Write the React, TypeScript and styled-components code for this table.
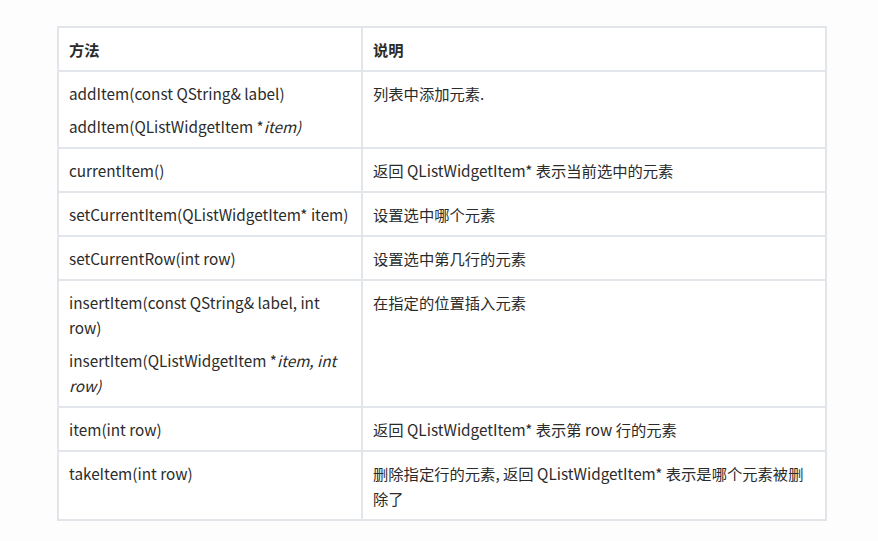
import React from 'react';
import styled, { createGlobalStyle } from 'styled-components';

const GlobalStyle = createGlobalStyle`
  html, body {
    margin: 0;
    padding: 0;
    background: #fdfdfd;
  }

  body {
    color: #2b2b2b;
    font-family: 'Noto Sans CJK SC', 'Noto Sans', sans-serif;
    font-size: 15.3px;
  }
`;

const Page = styled.div`
  padding: 26px 0 0 57px;
`;

const Table = styled.table`
  border-collapse: collapse;
  table-layout: fixed;
  width: 770px;
  background: #fff;

  th, td {
    border: 2px solid #e2e5e9;
    padding: 8.5px 10px;
    text-align: left;
    vertical-align: top;
    line-height: 25px;
  }
`;

const HeadCell = styled.th`
  font-weight: 700;
`;

const Cell = styled.td``;

const Para = styled.p`
  margin: 0;

  & + & {
    margin-top: 8px;
  }
`;

interface Row {
  method: React.ReactNode[];
  desc: string;
}

const rows: Row[] = [
  {
    method: [
      'addItem(const QString& label)',
      <>addItem(QListWidgetItem *<i>item)</i></>
    ],
    desc: '列表中添加元素.'
  },
  { method: ['currentItem()'], desc: '返回 QListWidgetItem* 表示当前选中的元素' },
  { method: ['setCurrentItem(QListWidgetItem* item)'], desc: '设置选中哪个元素' },
  { method: ['setCurrentRow(int row)'], desc: '设置选中第几行的元素' },
  {
    method: [
      'insertItem(const QString& label, int row)',
      <>insertItem(QListWidgetItem *<i>item, int row)</i></>
    ],
    desc: '在指定的位置插入元素'
  },
  { method: ['item(int row)'], desc: '返回 QListWidgetItem* 表示第 row 行的元素' },
  { method: ['takeItem(int row)'], desc: '删除指定行的元素, 返回 QListWidgetItem* 表示是哪个元素被删除了' }
];

export default function App (): React.ReactElement {
  return (
    <Page>
      <GlobalStyle />
      <Table>
        <colgroup>
          <col style={{ width: 304 }} />
          <col />
        </colgroup>
        <thead>
          <tr>
            <HeadCell>方法</HeadCell>
            <HeadCell>说明</HeadCell>
          </tr>
        </thead>
        <tbody>
          {rows.map((row, i) => (
            <tr key={i}>
              <Cell>
                {row.method.map((m, j) => <Para key={j}>{m}</Para>)}
              </Cell>
              <Cell>
                <Para>{row.desc}</Para>
              </Cell>
            </tr>
          ))}
        </tbody>
      </Table>
    </Page>
  );
}
